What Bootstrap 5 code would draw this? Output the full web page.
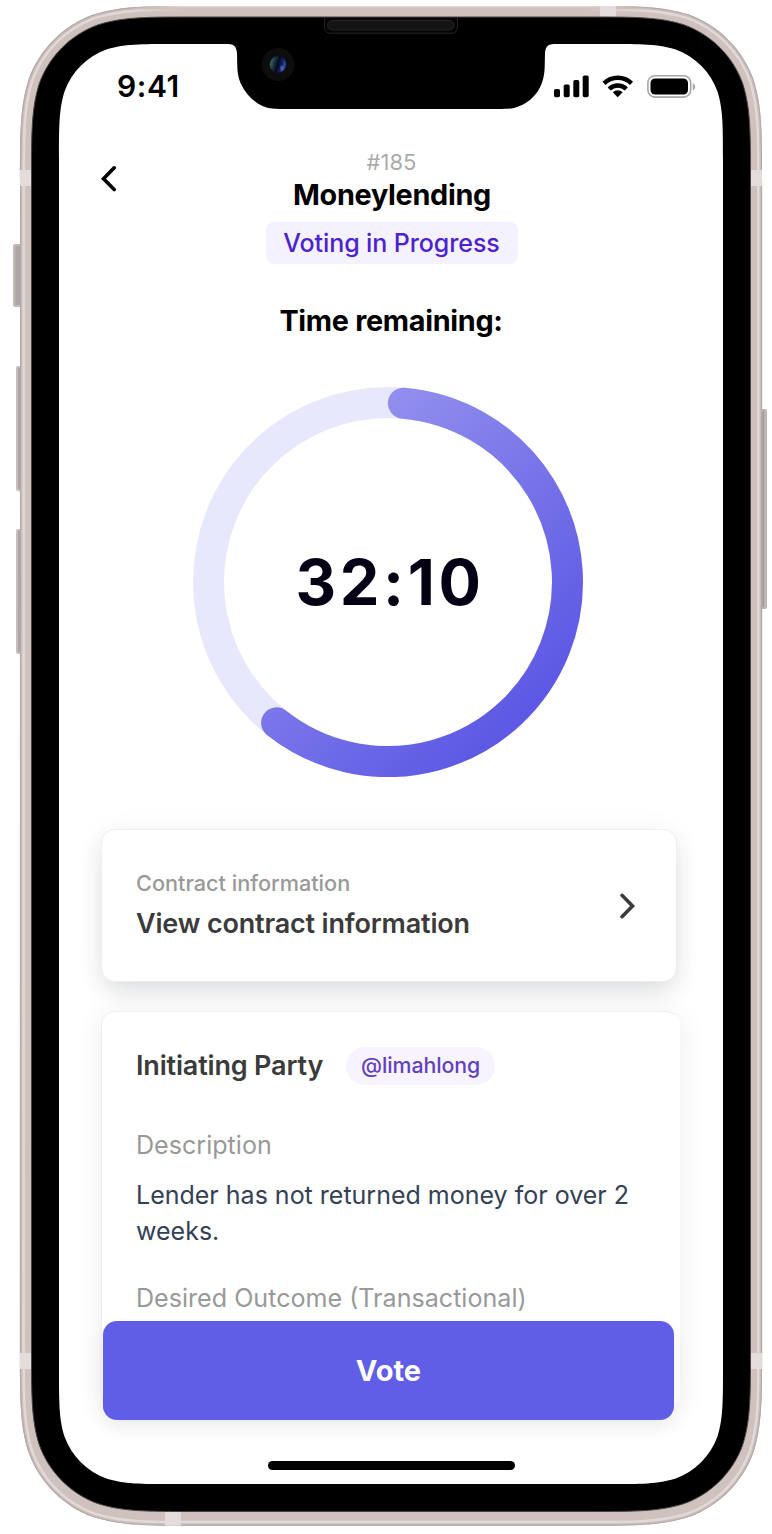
<!DOCTYPE html>
<html lang="en">
<head>
<meta charset="utf-8">
<meta name="viewport" content="width=device-width, initial-scale=1">
<title>Moneylending</title>
<link href="https://cdn.jsdelivr.net/npm/bootstrap@5.3.0/dist/css/bootstrap.min.css" rel="stylesheet">
<style>
  body { font-family: Inter, "Liberation Sans", sans-serif; background: #fff; color: #000; overflow: hidden; }
  .device { width: 772px; height: 1534px; }
  .device-frame { z-index: 0; }
  .screen { z-index: 1; width: 664px; height: 1440px; margin-left: 59px; padding-top: 44px; box-sizing: content-box; }
  .status-bar { height: 84px; padding: 0 27px 0 58px; }
  .clock { font-size: 30px; font-weight: 600; letter-spacing: .6px; line-height: 36px; padding-bottom: 1px; }
  .top-bar { height: 137px; padding: 0 41px 0 42px; }
  .back-btn { width: 20px; height: 28px; margin-top: 37px; border: 0; background: none; }
  .heading { width: 252px; padding-top: 21px; }
  .case-id { font-size: 22px; line-height: 26px; font-weight: 400; color: #ababab; }
  .case-title { font-size: 28.8px; line-height: 36px; font-weight: 700; letter-spacing: -.3px; padding: 2px 0 0 1px; }
  .phase { height: 42px; width: 252px; margin-top: 9px; border-radius: 8px; background: #f5f2ff; color: #4c22d0; font-size: 25px; font-weight: 500; letter-spacing: -.1px; line-height: 42px; padding: 0; }
  .remaining { font-size: 28.8px; line-height: 36px; font-weight: 700; margin-top: 38px; letter-spacing: -.3px; }
  .timer { width: 390px; height: 390px; margin: 48px auto 52px 134px; }
  .timer-value { font-size: 63px; line-height: 76px; font-weight: 700; letter-spacing: 3.6px; padding-left: 4px; color: #050014; }
  .panel { border: 1.5px solid #efefef; border-radius: 14px; margin-left: 42px; background: #fff; box-shadow: 0 12px 24px -4px rgba(48,56,66,.15), 0 2px 28px rgba(48,66,60,.055); }
  .panel-link { width: 576px; height: 153px; padding: 0 38px 0 34px; }
  .panel-case { width: 579px; height: 397px; margin-top: 29px; padding: 35px 34px 0 34px; border-right-color: #fff; border-bottom-color: #fff; box-shadow: 0 4px 28px rgba(48,66,60,.09); }
  .eyebrow { font-size: 21.7px; line-height: 28px; font-weight: 500; color: #999; }
  .panel-title { font-size: 27px; line-height: 34px; font-weight: 600; color: #3b3b3b; letter-spacing: -.17px; }
  .eyebrow + .panel-title { margin: 10px 0 1px; }
  .handle { width: 149px; height: 38px; margin-left: 23px; border-radius: 19px; background: #f7f4ff; color: #633fc0; font-size: 21.3px; font-weight: 500; letter-spacing: -.05px; line-height: 37px; padding: 0; }
  .field-label { font-size: 25.1px; line-height: 32px; font-weight: 400; color: #999; }
  .field-text { font-size: 25px; line-height: 36px; font-weight: 400; color: #344054; margin: 15.500px 0 33px; }
  .party-row { margin-bottom: 44px; }
  .vote { width: 571px; height: 99px; margin: -87px 0 0 44px; border: 0; border-radius: 14px; background: #605de6; color: #fff; font-size: 29px; font-weight: 700; box-shadow: 0 8px 20px rgba(0,0,0,.06); }
  .vote:hover { background: #605de6; color: #fff; }
  .home-bar { width: 247px; height: 9px; border-radius: 5px; margin: 41px 0 0 209px; background: #000; }
</style>
</head>
<body>
<div class="device position-relative">

  <!-- Handset: side buttons, aluminium band, bezel, screen with notch -->
  <svg class="device-frame position-absolute top-0 start-0" width="772" height="1534" viewBox="0 0 772 1534" aria-hidden="true">
    <defs>
      <path id="band" d="M20 183.300c0-51.100 0-76.600 8.700-104.100c10.900-30 34.600-53.600 64.600-64.600c27.500-8.700 53-8.700 104.100-8.700H584.700c51.100 0 76.600 0 104.100 8.700c30 10.900 53.600 34.600 64.600 64.600c8.700 27.500 8.700 53 8.700 104.100V1348.400c0 51.100 0 76.600-8.700 104.100c-10.900 30-34.600 53.600-64.600 64.600c-27.500 8.700-53 8.700-104.100 8.700H197.300c-51.100 0-76.600 0-104.100-8.700c-30-10.900-53.600-34.600-64.600-64.600c-8.700-27.500-8.700-53-8.700-104.100Z"/>
      <clipPath id="bandClip"><use href="#band"/></clipPath>
      <linearGradient id="topBase" x1="0" x2="1" y1="0" y2="0">
        <stop offset="0" stop-color="#cfc1be" stop-opacity="0"/><stop offset=".12" stop-color="#cfc1be"/><stop offset=".88" stop-color="#cfc1be"/><stop offset="1" stop-color="#cfc1be" stop-opacity="0"/>
      </linearGradient>
      <linearGradient id="topEdge" x1="0" x2="1" y1="0" y2="0">
        <stop offset="0" stop-color="#ddd4d2" stop-opacity="0"/><stop offset=".12" stop-color="#ddd4d2"/><stop offset=".88" stop-color="#ddd4d2"/><stop offset="1" stop-color="#ddd4d2" stop-opacity="0"/>
      </linearGradient>
      <linearGradient id="lens" x1="0" x2="1" y1=".3" y2=".6">
        <stop offset="0" stop-color="#3f6f66"/><stop offset=".3" stop-color="#17303c"/><stop offset=".5" stop-color="#040a20"/><stop offset=".7" stop-color="#0f1f5c"/><stop offset=".88" stop-color="#2a4cae"/><stop offset="1" stop-color="#15286c"/>
      </linearGradient>
    </defs>
    <g fill="#aea5a3">
      <rect x="13" y="244" width="9" height="63" rx="2" fill="#c2bab8"/>
      <rect x="15.500" y="246" width="6" height="59"/>
      <rect x="16" y="366" width="6" height="125" rx="2" fill="#c6bfbd"/>
      <rect x="18" y="368" width="3" height="121"/>
      <rect x="16" y="529" width="6" height="125" rx="2" fill="#c6bfbd"/>
      <rect x="18" y="531" width="3" height="121"/>
      <rect x="760" y="409" width="7" height="200" rx="2" fill="#bcb6b3"/>
      <rect x="761" y="411" width="3" height="196" fill="#a39a97"/>
    </g>
    <g clip-path="url(#bandClip)">
      <use href="#band" fill="#cfc1be"/>
      <g fill="none">
        <use href="#band" stroke="#e1d9d7" stroke-width="10"/>
        <use href="#band" stroke="#cabebb" stroke-width="5"/>
        <use href="#band" stroke="#b3a8a6" stroke-width="2"/>
      </g>
      <rect x="125" y="5.900" width="523" height="12" fill="url(#topBase)"/>
      <rect x="125" y="5.900" width="523" height="1.600" fill="url(#topEdge)"/>
      <g fill="#e3dcda">
        <rect x="600" y="5" width="16" height="12"/>
        <rect x="165" y="1511" width="16" height="15"/>
        <rect x="19" y="170" width="13" height="16"/>
        <rect x="750" y="170" width="13" height="16"/>
        <rect x="19" y="1353" width="13" height="16"/>
        <rect x="750" y="1353" width="13" height="16"/>
      </g>
    </g>
    <path fill="#000" stroke="#4a4546" stroke-width="1" d="M31.500 177.500c0-46.200 0-69.300 7.900-94.200c9.900-27.200 31.300-48.600 58.400-58.400c24.900-7.900 48-7.900 94.200-7.900H590c46.200 0 69.300 0 94.200 7.900c27.200 9.900 48.600 31.300 58.400 58.400c7.900 24.900 7.900 48 7.900 94.200V1351c0 46.200 0 69.300-7.900 94.200c-9.900 27.200-31.300 48.600-58.400 58.400c-24.900 7.900-48 7.900-94.200 7.900H192c-46.200 0-69.300 0-94.200-7.900c-27.200-9.900-48.600-31.300-58.400-58.400c-7.900-24.900-7.900-48-7.900-94.200Z"/>
    <path fill="#fff" d="M59 158.600c0-33 0-49.500 5.600-67.300c7.100-19.400 22.300-34.700 41.700-41.700c17.800-5.600 34.300-5.600 67.300-5.600H228C235 44 236.800 48 237 54C237.500 66 236.500 74 241 84C247 97 259 107 272 108.500C276 109 282 109 290 109H498C506 109 510 108.800 514 108C526 105 537 96 541.500 84C545.500 74 544.500 66 545 54C545.200 48 547 44 554 44H608.400c33 0 49.500 0 67.300 5.600c19.400 7.100 34.700 22.300 41.700 41.700c5.600 17.800 5.600 34.300 5.600 67.300V1369.400c0 33 0 49.500-5.600 67.300c-7.100 19.400-22.300 34.700-41.700 41.700c-17.800 5.600-34.300 5.600-67.300 5.600H173.600c-33 0-49.500 0-67.300-5.600c-19.400-7.100-34.700-22.300-41.700-41.700c-5.600-17.800-5.600-34.300-5.600-67.300Z"/>
    <path d="M324.500 18V27C324.500 31 327 33.300 331 33.300H451C455 33.300 457.500 31 457.500 27V18" fill="#050505" stroke="#232323"/>
    <rect x="327.500" y="20.500" width="126.500" height="9.500" rx="4.700" fill="#141414" stroke="#252525"/>
    <circle cx="278" cy="64.500" r="16.500" fill="#0d0d0d"/>
    <circle cx="278" cy="64.500" r="8.300" fill="url(#lens)"/>
    <ellipse cx="282" cy="68" rx="2" ry="2.600" fill="#6670b8" opacity=".6"/>
  </svg>

  <main class="screen position-relative">
    <header class="status-bar d-flex justify-content-between align-items-center">
      <span class="clock">9:41</span>
      <svg width="143" height="26" viewBox="553 73 143 26" aria-label="Signal, Wi-Fi and battery">
        <rect x="554" y="89" width="6" height="8.300" rx="1.700"/>
        <rect x="563.700" y="84.500" width="6" height="12.800" rx="1.700"/>
        <rect x="573.300" y="80" width="6" height="17.300" rx="1.700"/>
        <rect x="582.700" y="75.500" width="6" height="21.800" rx="1.700"/>
        <g fill="none" stroke="#000" stroke-width="4.400">
          <path d="M604 83.300A19.800 19.800 0 0 1 631.500 83.300"/>
          <path d="M609.200 89A12.300 12.300 0 0 1 626.300 89"/>
        </g>
        <path d="M617.700 97.300L612.800 92.300A7 7 0 0 1 622.700 92.300Z"/>
        <rect x="647.900" y="75.700" width="42.800" height="21.400" rx="7" fill="none" stroke="#a6a6a6" stroke-width="1.600"/>
        <rect x="650.500" y="78.400" width="37.500" height="16.200" rx="4.600"/>
        <path d="M692.800 83.200C695.900 84.600 695.900 89.200 692.800 90.400Z" fill="#a6a6a6"/>
      </svg>
    </header>

    <nav class="top-bar d-flex">
      <button class="back-btn p-0 d-flex" aria-label="Back">
        <svg width="20" height="28" viewBox="0 0 20 28"><path d="M13.200 2.800L2.500 13.700L13.200 24.500" fill="none" stroke="#000" stroke-width="3.600" stroke-linecap="round" stroke-linejoin="miter"/></svg>
      </button>
      <div class="heading text-center ms-auto me-auto">
        <div class="case-id">#185</div>
        <h1 class="case-title mb-0">Moneylending</h1>
        <div class="phase badge d-block">Voting in Progress</div>
      </div>
      <span class="back-btn"></span>
    </nav>

    <h2 class="remaining text-center mb-0">Time remaining:</h2>

    <section class="timer position-relative d-flex justify-content-center align-items-center">
      <svg class="position-absolute top-0 start-0" width="390" height="390" viewBox="193 387 390 390" aria-hidden="true">
        <defs>
          <linearGradient id="elapsed" gradientUnits="userSpaceOnUse" x1="394" y1="399" x2="612" y2="620">
            <stop offset="0" stop-color="#918eee"/><stop offset="1" stop-color="#5d59e4"/>
          </linearGradient>
        </defs>
        <circle cx="388" cy="582" r="179.500" fill="none" stroke="#e8e8fd" stroke-width="31"/>
        <path d="M403.400 403.200A179.500 179.500 0 1 1 276.600 722.800" fill="none" stroke="url(#elapsed)" stroke-width="31" stroke-linecap="round"/>
      </svg>
      <div class="timer-value position-relative">32:10</div>
    </section>

    <a class="panel panel-link d-flex align-items-center justify-content-between text-decoration-none" href="#">
      <div>
        <div class="eyebrow">Contract information</div>
        <div class="panel-title">View contract information</div>
      </div>
      <svg width="20" height="28" viewBox="0 0 20 28"><path d="M4 3.300L14.500 14L4 24.700" fill="none" stroke="#3b3b3b" stroke-width="3.600" stroke-linecap="round"/></svg>
    </a>

    <section class="panel panel-case">
      <div class="party-row d-flex align-items-center">
        <div class="panel-title">Initiating Party</div>
        <span class="handle badge">@limahlong</span>
      </div>
      <div class="field-label">Description</div>
      <p class="field-text">Lender has not returned money for over 2 weeks.</p>
      <div class="field-label">Desired Outcome (Transactional)</div>
    </section>

    <button class="vote btn d-block position-relative">Vote</button>
    <div class="home-bar"></div>
  </main>
</div>
<script src="https://cdn.jsdelivr.net/npm/bootstrap@5.3.0/dist/js/bootstrap.bundle.min.js"></script>
</body>
</html>
